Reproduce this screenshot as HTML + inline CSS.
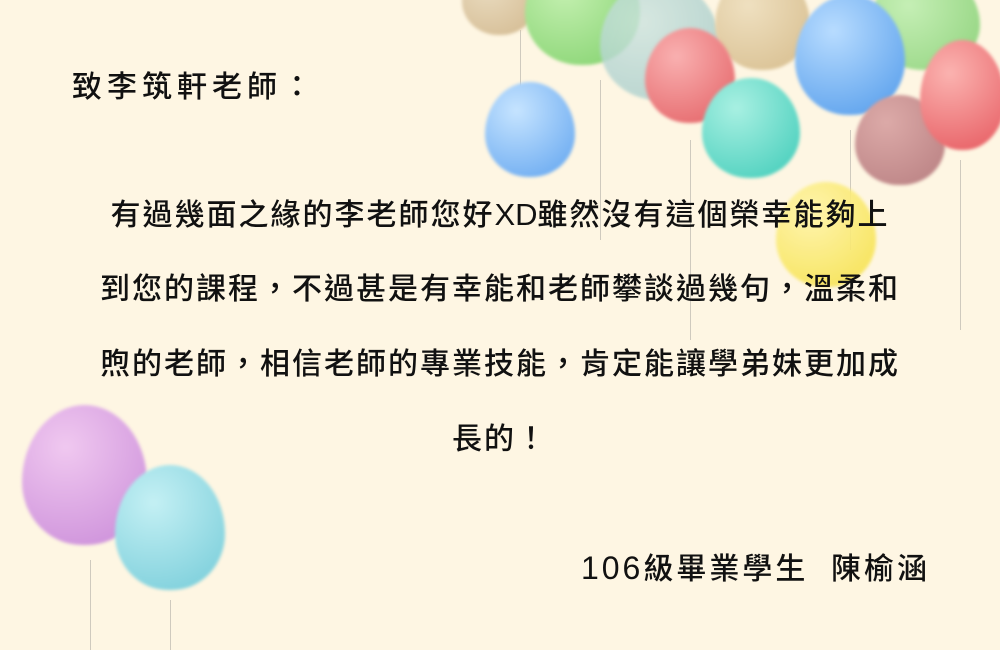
<!DOCTYPE html>
<html><head><meta charset="utf-8"><style>
body{margin:0;width:1000px;height:650px;background:#fef6e3;overflow:hidden;position:relative;font-family:"Liberation Sans","Noto Sans CJK TC",sans-serif;color:#111}
.b{position:absolute;border-radius:50% 50% 48% 48%/55% 55% 45% 45%;filter:blur(1.5px)}
.s{position:absolute;width:1px;background:rgba(120,120,120,.35)}
.t{position:absolute;font-size:30px;letter-spacing:2px;white-space:nowrap;font-weight:500;line-height:34px}
.l{letter-spacing:0;font-size:31px}
</style></head><body>
<div class="s" style="left:520px;top:30px;height:80px"></div>
<div class="s" style="left:600px;top:80px;height:160px"></div>
<div class="s" style="left:690px;top:140px;height:200px"></div>
<div class="s" style="left:850px;top:130px;height:120px"></div>
<div class="s" style="left:960px;top:160px;height:170px"></div>
<div class="s" style="left:90px;top:560px;height:90px"></div>
<div class="s" style="left:170px;top:600px;height:50px"></div>
<div class="b" style="left:462px;top:-40px;width:75px;height:75px;background:radial-gradient(circle at 35% 35%,#eadcc0,#d2b88e)"></div>
<div class="b" style="left:525px;top:-50px;width:115px;height:115px;background:radial-gradient(circle at 35% 35%,#c4f0b0,#7fd06a)"></div>
<div class="b" style="left:600px;top:-20px;width:120px;height:120px;background:radial-gradient(circle at 35% 35%,#cde4e0,#9fc8c6);opacity:.8"></div>
<div class="b" style="left:715px;top:-30px;width:95px;height:100px;background:radial-gradient(circle at 35% 35%,#efe0c0,#d6bc8c)"></div>
<div class="b" style="left:870px;top:-30px;width:110px;height:100px;background:radial-gradient(circle at 35% 35%,#c5efb5,#8fd27c)"></div>
<div class="b" style="left:795px;top:-5px;width:110px;height:120px;background:radial-gradient(circle at 35% 30%,#b8dcff,#4f99ea)"></div>
<div class="b" style="left:645px;top:28px;width:90px;height:95px;background:radial-gradient(circle at 35% 30%,#f9b0b0,#e35e62)"></div>
<div class="b" style="left:485px;top:82px;width:90px;height:95px;background:radial-gradient(circle at 35% 30%,#c6e4ff,#5fa3ef)"></div>
<div class="b" style="left:702px;top:78px;width:98px;height:100px;background:radial-gradient(circle at 35% 30%,#a8f0e2,#3ecbb8)"></div>
<div class="b" style="left:855px;top:95px;width:90px;height:90px;background:radial-gradient(circle at 35% 30%,#dcaaa8,#b77e80)"></div>
<div class="b" style="left:920px;top:40px;width:85px;height:110px;background:radial-gradient(circle at 35% 30%,#fbb3b0,#e6585e)"></div>
<div class="b" style="left:776px;top:182px;width:100px;height:105px;background:radial-gradient(circle at 35% 30%,#fff5a8,#f5df40);opacity:.9"></div>
<div class="b" style="left:22px;top:405px;width:125px;height:140px;background:radial-gradient(circle at 35% 30%,#f0c8f0,#c98ad8)"></div>
<div class="b" style="left:115px;top:465px;width:110px;height:125px;background:radial-gradient(circle at 35% 30%,#c4f0f4,#74cbd8)"></div>
<div class="t" style="left:72px;top:71px;letter-spacing:5px">致李筑軒老師：</div>
<div class="t" style="left:0;width:1000px;text-align:center;top:198px">有過幾面之緣的李老師您好<span class="l">XD</span>雖然沒有這個榮幸能夠上</div>
<div class="t" style="left:0;width:1000px;text-align:center;top:273px">到您的課程，不過甚是有幸能和老師攀談過幾句，溫柔和</div>
<div class="t" style="left:0;width:1000px;text-align:center;top:348px">煦的老師，相信老師的專業技能，肯定能讓學弟妹更加成</div>
<div class="t" style="left:0;width:1000px;text-align:center;top:423px">長的！</div>
<div class="t" style="right:70px;top:551px;letter-spacing:3px"><span class="l" style="letter-spacing:3px;font-size:32px">106</span>級畢業學生&nbsp; 陳榆涵</div>
</body></html>
